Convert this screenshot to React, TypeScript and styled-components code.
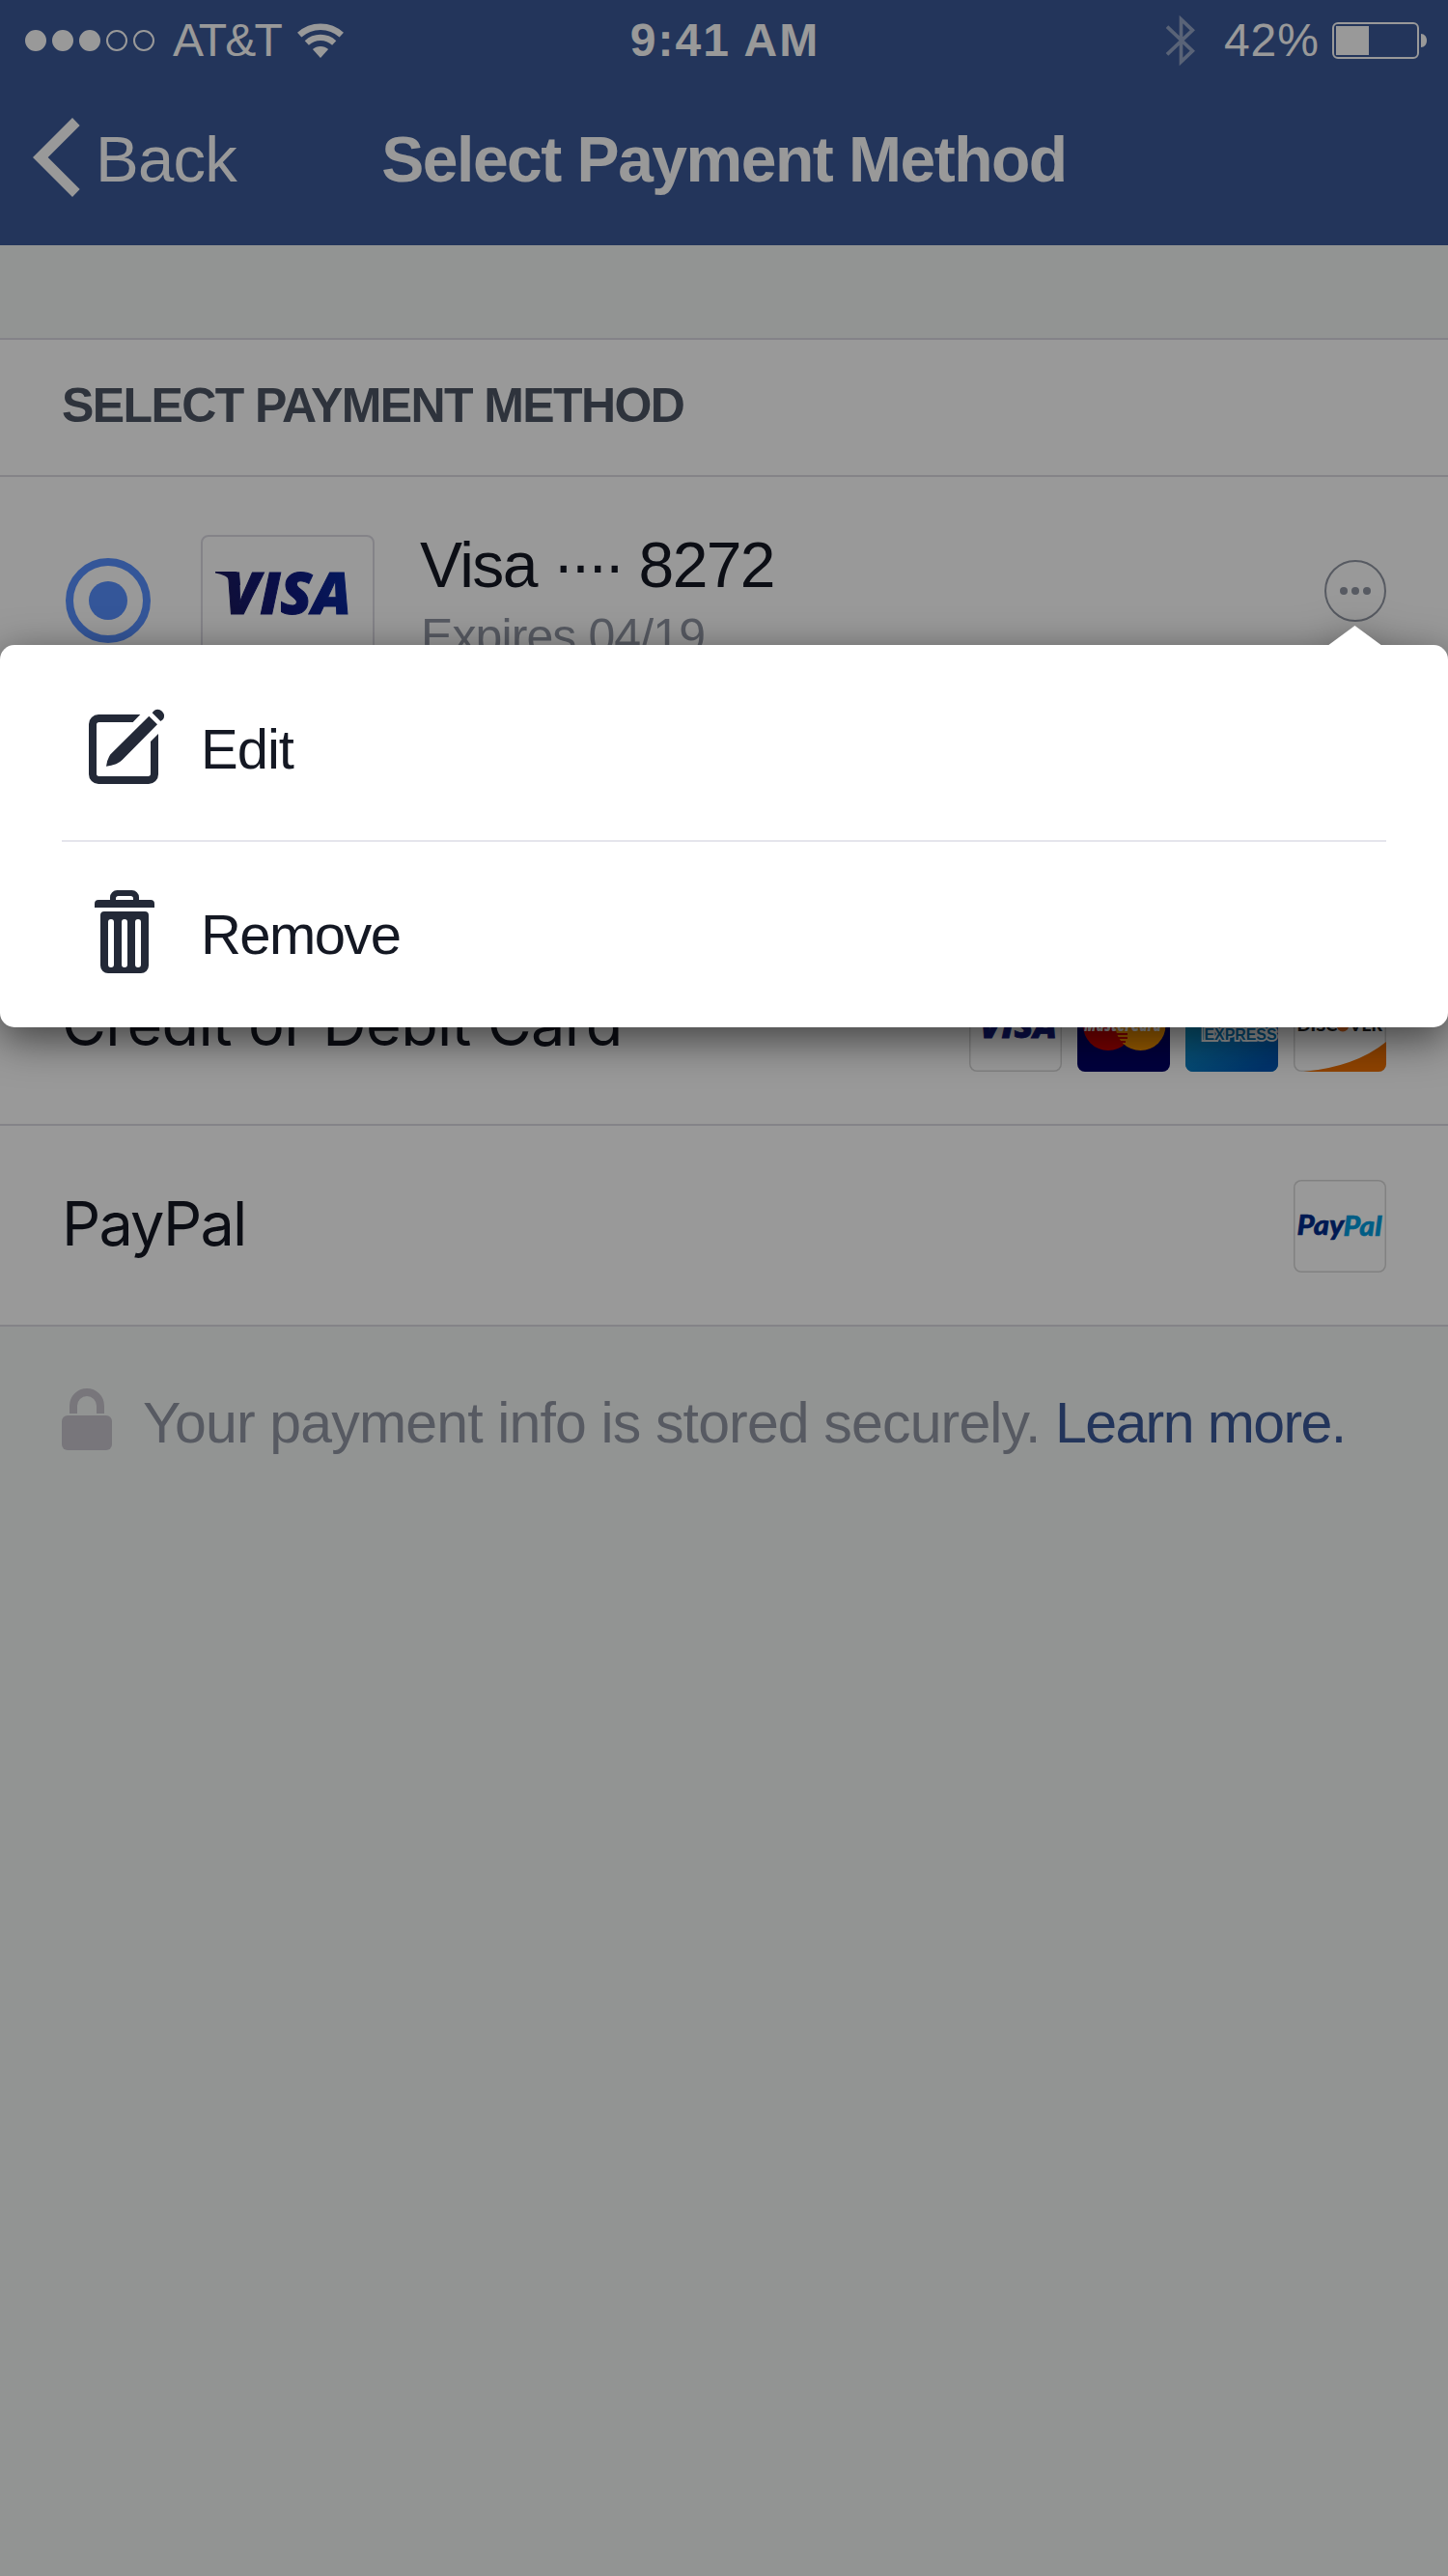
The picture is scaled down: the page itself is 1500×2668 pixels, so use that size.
import React from "react";
import styled, { createGlobalStyle } from "styled-components";

const GlobalStyle = createGlobalStyle`
  html, body { margin: 0; padding: 0; background: #f4f7f5; }
  *, *::before, *::after { box-sizing: border-box; }
  svg { display: block; flex: none; }
`;

const sans = `"Liberation Sans", Arial, Helvetica, sans-serif`;
const system = `Inter, Roboto, sans-serif`;
const hairline = "#dcdbe3";

const Screen = styled.div`
  position: relative;
  width: 1500px;
  height: 2668px;
  overflow: hidden;
  background: #f4f7f5;
  font-family: ${sans};
  color: #141823;
`;

const Header = styled.header`
  height: 254px;
  background: #3b5998;
  color: #fff;
`;

const StatusBar = styled.div`
  display: grid;
  grid-template-columns: 1fr auto 1fr;
  align-items: center;
  height: 83px;
  padding: 0 22px 0 26px;
  font-size: 48px;
  line-height: 60px;
  white-space: nowrap;
`;

const StatusGroup = styled.div<{ $end?: boolean }>`
  display: flex;
  align-items: center;
  justify-content: ${(p) => (p.$end ? "flex-end" : "flex-start")};
`;

const Signal = styled.div`
  display: flex;
  gap: 6px;
  margin-right: 19px;
`;

const SignalDot = styled.span<{ $on: boolean }>`
  width: 22px;
  height: 22px;
  border-radius: 50%;
  border: 2px solid #fff;
  background: ${(p) => (p.$on ? "#fff" : "transparent")};
`;

const Carrier = styled.span`
  letter-spacing: -1.8px;
  margin-right: 16px;
`;

const Clock = styled.span`
  font-weight: 700;
  letter-spacing: 2px;
  margin-right: 2px;
`;

const Percent = styled.span`
  letter-spacing: 1px;
  margin: 0 13px 0 29px;
`;

const NavBar = styled.nav`
  display: grid;
  grid-template-columns: 1fr auto 1fr;
  align-items: center;
  height: 164px;
  padding: 0 34px;
  font-size: 67px;
  line-height: 80px;
  white-space: nowrap;
`;

const Back = styled.div`
  display: flex;
  align-items: center;
  gap: 16px;
  letter-spacing: -0.7px;
  svg { margin-bottom: 4px; }
`;

const Title = styled.h1`
  margin: 0;
  font-size: 66px;
  font-weight: 700;
  letter-spacing: -1.5px;
`;

const Panel = styled.section`
  margin-top: 96px;
  border-top: 2px solid ${hairline};
  background: #fff;
`;

const SectionTitle = styled.h2`
  display: flex;
  align-items: center;
  height: 142px;
  margin: 0;
  padding: 0 64px 4px;
  border-bottom: 2px solid ${hairline};
  color: #4e5665;
  font-size: 50px;
  font-weight: 700;
  letter-spacing: -1.6px;
`;

const SavedRow = styled.div`
  display: flex;
  align-items: center;
  height: 256px;
  padding: 0 64px 0 68px;
`;

const Radio = styled.span`
  display: flex;
  align-items: center;
  justify-content: center;
  width: 88px;
  height: 88px;
  border: 8px solid #5890ff;
  border-radius: 50%;
  &::after {
    content: "";
    width: 40px;
    height: 40px;
    border-radius: 50%;
    background: #5890ff;
  }
`;

const CardFace = styled.div`
  width: 180px;
  height: 136px;
  margin: 0 47px 0 52px;
  border: 2px solid ${hairline};
  border-radius: 8px;
`;

const CardText = styled.div`
  flex: 1;
  padding-bottom: 6px;
  white-space: nowrap;
`;

const CardName = styled.div`
  display: flex;
  font-size: 66px;
  line-height: 80px;
  letter-spacing: -1.6px;
`;

const Mask = styled.span`
  margin: 0 18px 0 17px;
  letter-spacing: -4.3px;
`;

const Expiry = styled.div`
  padding-left: 1px;
  font-size: 50px;
  line-height: 68px;
  letter-spacing: -0.9px;
  color: #9197a3;
`;

const MoreButton = styled.div`
  display: flex;
  align-items: center;
  justify-content: center;
  gap: 4px;
  width: 64px;
  height: 64px;
  margin-bottom: 20px;
  border: 2px solid #9197a3;
  border-radius: 50%;
`;

const MoreDot = styled.span`
  width: 8px;
  height: 8px;
  border-radius: 50%;
  background: #9197a3;
`;

const AddRow = styled.div<{ $height: number; $gap?: number }>`
  display: flex;
  align-items: center;
  justify-content: space-between;
  height: ${(p) => p.$height}px;
  margin-top: ${(p) => p.$gap ?? 0}px;
  padding: 0 64px;
  border-bottom: 2px solid ${hairline};
`;

const AddLabel = styled.span<{ $tracking: number }>`
  padding-bottom: 5px;
  font-family: ${system};
  font-size: 63px;
  line-height: 80px;
  letter-spacing: ${(p) => p.$tracking}px;
`;

const Brands = styled.div<{ $drop?: number }>`
  display: flex;
  gap: 16px;
  margin-top: ${(p) => p.$drop ?? 0}px;
`;

const Brand = styled.div<{ $fill?: string }>`
  width: 96px;
  height: 96px;
  overflow: hidden;
  border-radius: 8px;
  background: ${(p) => p.$fill ?? "#fff"};
  box-shadow: ${(p) => (p.$fill ? "none" : "inset 0 0 0 1.5px #d8d8d8")};
`;

const Security = styled.footer`
  display: flex;
  align-items: center;
  height: 192px;
  padding: 0 64px;
  color: #9197a3;
  font-size: 59px;
  line-height: 72px;
  letter-spacing: -0.85px;
  white-space: nowrap;
`;

const SecurityText = styled.p`
  margin: 7px 0 0 32px;
`;

const Learn = styled.a`
  color: #3b5998;
  letter-spacing: -1.6px;
`;

const Dim = styled.div`
  position: absolute;
  inset: 0;
  background: rgba(0, 0, 0, 0.4);
`;

const Menu = styled.div`
  position: absolute;
  top: 668px;
  left: 0;
  width: 1500px;
  height: 396px;
  padding: 10px 64px 0;
  border-radius: 15px;
  background: #fff;
  filter: drop-shadow(0 12px 22px rgba(0, 0, 0, 0.58));
  &::before {
    content: "";
    position: absolute;
    top: -20px;
    left: 1375px;
    width: 57px;
    height: 21px;
    background: #fff;
    clip-path: polygon(50% 0, 100% 100%, 0 100%);
  }
`;

const MenuItem = styled.div<{ $first?: boolean }>`
  display: grid;
  grid-template-columns: 144px 1fr;
  align-items: center;
  height: ${(p) => (p.$first ? 194 : 192)}px;
  padding-top: ${(p) => (p.$first ? 4 : 0)}px;
  border-bottom: ${(p) => (p.$first ? "2px solid #e5e5ec" : "none")};
  font-size: 58px;
  line-height: 72px;
`;

const MenuIcon = styled.span<{ $left: number; $lift: number }>`
  padding-left: ${(p) => p.$left}px;
  padding-bottom: ${(p) => p.$lift}px;
`;

const MenuLabel = styled.span<{ $tracking: number }>`
  letter-spacing: ${(p) => p.$tracking}px;
`;

const WifiIcon = () => (
  <svg width="50" height="38" viewBox="307 21 50 38" fill="none">
    <path d="M310.2 34.2A32.3 32.3 0 0 1 353.8 34.2" stroke="#fff" strokeWidth="6.4" />
    <path d="M317.8 42.5A21 21 0 0 1 346.2 42.5" stroke="#fff" strokeWidth="6.2" />
    <path d="M332 58L323.9 49.1A12 12 0 0 1 340.1 49.1Z" fill="#fff" />
  </svg>
);

const BluetoothIcon = () => (
  <svg width="32" height="54" viewBox="142 39 96 162" fill="none">
    <path
      d="M148 77L227 152L191.500 186V54L227 88L148 163"
      stroke="#fff"
      strokeOpacity="0.46"
      strokeWidth="11"
    />
  </svg>
);

const BatteryIcon = () => (
  <svg width="98" height="38" viewBox="0 0 98 38" fill="none">
    <rect x="1" y="1" width="88" height="36" rx="5" stroke="#fff" strokeWidth="2" />
    <rect x="4" y="4" width="34" height="30" fill="#fff" />
    <path d="M92 12C95.500 12 98 15 98 19S95.500 26 92 26Z" fill="#fff" />
  </svg>
);

const ChevronIcon = () => (
  <svg width="49" height="82" viewBox="102 366 147 246">
    <path d="M225 366L248 390L149 489L248 588L225 612L102 489Z" fill="#fff" />
  </svg>
);

const EditIcon = () => (
  <svg width="80" height="80" viewBox="156 159 240 240" fill="#232937">
    <path d="M316 180H186A30 30 0 0 0 156 210V366A30 30 0 0 0 186 396H342A30 30 0 0 0 372 366V240L348 264V364A8 8 0 0 1 340 372H188A8 8 0 0 1 180 364V212A8 8 0 0 1 188 204H293Z" />
    <path d="M343 185L369 211L260 321Q252 329 241 334Q226 340 210 341Q212 323 219 311Q222 304 228 299Z" />
    <path d="M353 175L359 168A20 20 0 0 1 387 195L379 201Z" />
  </svg>
);

const TrashIcon = () => (
  <svg width="62" height="86" viewBox="174 726 186 258" fill="#232937">
    <path d="M174 780V768A12 12 0 0 1 186 756H222V748A22 22 0 0 1 244 726H290A22 22 0 0 1 312 748V756H348A12 12 0 0 1 360 768V780ZM240 756H294V752A8 8 0 0 0 286 744H248A8 8 0 0 0 240 752Z" />
    <path
      fillRule="evenodd"
      d="M204 792H330A12 12 0 0 1 342 804V960A24 24 0 0 1 318 984H216A24 24 0 0 1 192 960V804A12 12 0 0 1 204 792ZM216 825V957A9 9 0 0 0 234 957V825A9 9 0 0 0 216 825ZM258 825V957A9 9 0 0 0 276 957V825A9 9 0 0 0 258 825ZM300 825V957A9 9 0 0 0 318 957V825A9 9 0 0 0 300 825Z"
    />
  </svg>
);

const LockIcon = () => (
  <svg width="52" height="64" viewBox="0 0 52 64" fill="none">
    <path d="M12 26V18A14 14 0 0 1 40 18V26" stroke="#c8c5ce" strokeWidth="8" />
    <rect y="28" width="52" height="36" rx="6" fill="#c8c5ce" />
  </svg>
);

const VisaLogo = () => (
  <svg width="176" height="132" viewBox="210 556 176 132">
    <defs>
      <linearGradient id="visa" gradientUnits="userSpaceOnUse" x1="223" y1="630" x2="362" y2="600">
        <stop offset="0" stopColor="#1c1a5a" />
        <stop offset="0.5" stopColor="#10187a" />
        <stop offset="1" stopColor="#0a2a9c" />
      </linearGradient>
    </defs>
    <path d="M223 592H244Q247.500 592.500 248 597L249 606H238.500Q238 599 233 596.500Q229 594.500 223 593.500Z" fill="url(#visa)" />
    <text
      x="232"
      y="635.500"
      fontFamily="Open Sans"
      fontWeight="800"
      fontStyle="italic"
      fontSize="61"
      textLength="132"
      lengthAdjust="spacingAndGlyphs"
      fill="url(#visa)"
      stroke="url(#visa)"
      strokeWidth="1"
    >
      VISA
    </text>
  </svg>
);

const SmallVisa = () => (
  <svg width="96" height="96" viewBox="1004 1014 96 96">
    <text
      x="1015"
      y="1075"
      fontFamily="Open Sans"
      fontWeight="800"
      fontStyle="italic"
      fontSize="36"
      textLength="80"
      lengthAdjust="spacingAndGlyphs"
      fill="#131c80"
      stroke="#131c80"
      strokeWidth="0.8"
    >
      VISA
    </text>
  </svg>
);

const MasterCardLogo = () => (
  <svg width="96" height="96" viewBox="1116 1014 96 96">
    <circle cx="1148" cy="1062" r="26" fill="#cc0000" />
    <circle cx="1181.500" cy="1062" r="26" fill="#ff9900" />
    <path d="M1157 1071H1168M1158 1075H1168M1159 1079H1166" stroke="#cc0000" strokeWidth="2" />
    <text
      x="1123"
      y="1068"
      fontFamily="Open Sans"
      fontWeight="800"
      fontStyle="italic"
      fontSize="17"
      textLength="80"
      lengthAdjust="spacingAndGlyphs"
      fill="#fff"
    >
      MasterCard
    </text>
  </svg>
);

const AmexLogo = () => (
  <svg width="96" height="96" viewBox="1228 1014 96 96">
    <defs>
      <linearGradient id="amex" x1="0" y1="0" x2="0.8" y2="1">
        <stop offset="0" stopColor="#16b0c4" />
        <stop offset="0.5" stopColor="#0b84c4" />
        <stop offset="1" stopColor="#0056b4" />
      </linearGradient>
    </defs>
    <rect x="1228" y="1014" width="96" height="96" fill="url(#amex)" />
    <path d="M1245.500 1060V1078H1262" stroke="#fff" strokeWidth="1.800" fill="none" />
    <text
      x="1247.500"
      y="1077"
      fontFamily="Liberation Sans"
      fontWeight="700"
      fontSize="17"
      textLength="75"
      lengthAdjust="spacingAndGlyphs"
      fill="#0a78b8"
      stroke="#fff"
      strokeWidth="3.600"
      paintOrder="stroke"
    >
      EXPRESS
    </text>
  </svg>
);

const DiscoverLogo = () => (
  <svg width="96" height="96" viewBox="1340 1014 96 96">
    <path d="M1350 1110Q1404 1105 1436 1079V1110Z" fill="#ee7000" />
    <text x="1343.500" y="1068" fontFamily="Lato" fontWeight="900" fontSize="17" textLength="42" lengthAdjust="spacingAndGlyphs" fill="#222">
      DISC
    </text>
    <circle cx="1391" cy="1062" r="6.500" fill="#ee7020" />
    <text x="1398" y="1068" fontFamily="Lato" fontWeight="900" fontSize="17" textLength="34" lengthAdjust="spacingAndGlyphs" fill="#222">
      VER
    </text>
  </svg>
);

const PayPalLogo = () => (
  <svg width="96" height="96" viewBox="1340 1222 96 96">
    <g fontFamily="Lato" fontWeight="900" fontStyle="italic" fontSize="28">
      <text x="1343.500" y="1279" textLength="49" lengthAdjust="spacingAndGlyphs" fill="#002c8a" stroke="#002c8a" strokeWidth="0.5">
        Pay
      </text>
      <text x="1391.500" y="1280" textLength="40" lengthAdjust="spacingAndGlyphs" fill="#009cde" stroke="#009cde" strokeWidth="0.5">
        Pal
      </text>
    </g>
  </svg>
);

export default function App() {
  return (
    <Screen>
      <GlobalStyle />
      <Header>
        <StatusBar>
          <StatusGroup>
            <Signal>
              {[true, true, true, false, false].map((on, i) => (
                <SignalDot key={i} $on={on} />
              ))}
            </Signal>
            <Carrier>AT&amp;T</Carrier>
            <WifiIcon />
          </StatusGroup>
          <Clock>9:41 AM</Clock>
          <StatusGroup $end>
            <BluetoothIcon />
            <Percent>42%</Percent>
            <BatteryIcon />
          </StatusGroup>
        </StatusBar>
        <NavBar>
          <Back>
            <ChevronIcon />
            Back
          </Back>
          <Title>Select Payment Method</Title>
        </NavBar>
      </Header>

      <Panel>
        <SectionTitle>SELECT PAYMENT METHOD</SectionTitle>
        <SavedRow>
          <Radio />
          <CardFace>
            <VisaLogo />
          </CardFace>
          <CardText>
            <CardName>
              <span>Visa</span>
              <Mask>····</Mask>
              <span>8272</span>
            </CardName>
            <Expiry>Expires 04/19</Expiry>
          </CardText>
          <MoreButton>
            <MoreDot />
            <MoreDot />
            <MoreDot />
          </MoreButton>
        </SavedRow>
        <AddRow $height={206} $gap={210}>
          <AddLabel $tracking={-0.65}>Credit or Debit Card</AddLabel>
          <Brands>
            <Brand>
              <SmallVisa />
            </Brand>
            <Brand $fill="#000066">
              <MasterCardLogo />
            </Brand>
            <Brand $fill="#0b84c4">
              <AmexLogo />
            </Brand>
            <Brand>
              <DiscoverLogo />
            </Brand>
          </Brands>
        </AddRow>
        <AddRow $height={208}>
          <AddLabel $tracking={-1.8}>PayPal</AddLabel>
          <Brands $drop={2}>
            <Brand>
              <PayPalLogo />
            </Brand>
          </Brands>
        </AddRow>
      </Panel>

      <Security>
        <LockIcon />
        <SecurityText>
          Your payment info is stored securely. <Learn>Learn more.</Learn>
        </SecurityText>
      </Security>

      <Dim />

      <Menu>
        <MenuItem $first>
          <MenuIcon $left={28} $lift={6}>
            <EditIcon />
          </MenuIcon>
          <MenuLabel $tracking={-1}>Edit</MenuLabel>
        </MenuItem>
        <MenuItem>
          <MenuIcon $left={34} $lift={6}>
            <TrashIcon />
          </MenuIcon>
          <MenuLabel $tracking={-1.6}>Remove</MenuLabel>
        </MenuItem>
      </Menu>
    </Screen>
  );
}
